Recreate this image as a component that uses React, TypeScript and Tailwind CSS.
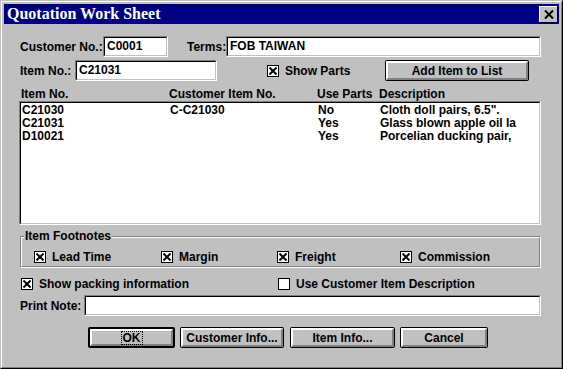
import React from 'react';

const FONT = { fontFamily: '"Liberation Sans", Arial, sans-serif' };

const rows = [
  { item: 'C21030', cust: 'C-C21030', parts: 'No', desc: 'Cloth doll pairs, 6.5".' },
  { item: 'C21031', cust: '', parts: 'Yes', desc: 'Glass blown apple oil la' },
  { item: 'D10021', cust: '', parts: 'Yes', desc: 'Porcelian ducking pair,' },
];

const Field = ({ w, value = '' }: { w: string; value?: string }) => (
  <div className={`${w} h-[21px] border border-t-[#808080] border-l-[#808080] border-b-white border-r-white`}>
    <div className="h-full border border-t-black border-l-black border-b-[#c0c0c0] border-r-[#c0c0c0] bg-white pl-[2px] leading-[17px] overflow-hidden whitespace-nowrap">
      {value}
    </div>
  </div>
);

const Check = ({ checked }: { checked: boolean }) => (
  <div className="w-[12px] h-[12px] border border-black bg-white flex items-center justify-center shrink-0">
    {checked && (
      <svg width="8" height="8" viewBox="0 0 8 8">
        <path d="M0.5 0.5 L7.5 7.5 M7.5 0.5 L0.5 7.5" stroke="black" strokeWidth="2" />
      </svg>
    )}
  </div>
);

const Button = ({ w, label, def = false }: { w: string; label: string; def?: boolean }) => (
  <div className={`${w} h-[21px] rounded-[2px] bg-black ${def ? 'p-[2px]' : 'p-[1px]'}`}>
    <div className="h-full bg-[#c0c0c0] border-2 border-t-white border-l-white border-b-[#808080] border-r-[#808080] flex items-center justify-center">
      {def ? (
        <span className="outline-1 outline-dotted outline-black px-[1px] leading-[12px]">{label}</span>
      ) : (
        <span>{label}</span>
      )}
    </div>
  </div>
);

export default function App() {
  return (
    <div className="w-[563px] h-[369px] font-bold text-[12px] text-black select-none" style={FONT}>
      <div className="w-full h-full border border-t-[#c0c0c0] border-l-[#c0c0c0] border-b-black border-r-black">
        <div className="w-full h-full border border-t-white border-l-white border-b-[#808080] border-r-[#808080] bg-[#c0c0c0] p-[2px] flex flex-col">
          {/* Title bar */}
          <div className="h-[20px] bg-[#000080] flex items-center justify-between pl-[3px] pr-[1px] shrink-0">
            <span className="text-white text-[16px] leading-[20px]" style={{ fontFamily: '"Liberation Serif", "Times New Roman", serif' }}>
              Quotation Work Sheet
            </span>
            <div className="w-[19px] h-[17px] bg-black p-[1px] pt-0 pl-0">
              <div className="w-full h-full bg-[#c0c0c0] border-t border-l border-white flex items-center justify-center">
                <svg width="10" height="9" viewBox="0 0 10 9">
                  <path d="M1 0.5 L9 8.5 M9 0.5 L1 8.5" stroke="black" strokeWidth="2" />
                </svg>
              </div>
            </div>
          </div>

          <div className="pl-[16px] pr-[16px] flex flex-col">
            {/* Row 1 */}
            <div className="flex items-center mt-[12px]">
              <span className="w-[83px]">Customer No.:</span>
              <Field w="w-[65px]" value="C0001" />
              <span className="ml-[19px] w-[39px]">Terms:</span>
              <Field w="w-[315px]" value="FOB TAIWAN" />
            </div>
            {/* Row 2 */}
            <div className="flex items-center mt-[3px]">
              <span className="w-[55px]">Item No.:</span>
              <Field w="w-[142px]" value="C21031" />
              <div className="ml-[50px] flex items-center gap-[6px] w-[118px]">
                <Check checked />
                <span>Show Parts</span>
              </div>
              <Button w="w-[144px]" label="Add Item to List" />
            </div>
            {/* List headers */}
            <div className="flex mt-[7px] leading-[13px] pl-[1px]">
              <span className="w-[148px]">Item No.</span>
              <span className="w-[148px]">Customer Item No.</span>
              <span className="w-[62px]">Use Parts</span>
              <span>Description</span>
            </div>
            {/* List box */}
            <div className="w-[522px] h-[124px] -ml-[1px] border border-t-[#808080] border-l-[#808080] border-b-white border-r-white">
              <div className="h-full border border-t-black border-l-black border-b-[#c0c0c0] border-r-[#c0c0c0] bg-white pt-[1px] pl-[1px]">
                {rows.map((r) => (
                  <div key={r.item} className="flex leading-[13px] whitespace-nowrap">
                    <span className="w-[148px]">{r.item}</span>
                    <span className="w-[148px]">{r.cust}</span>
                    <span className="w-[62px]">{r.parts}</span>
                    <span>{r.desc}</span>
                  </div>
                ))}
              </div>
            </div>
            {/* Item footnotes group */}
            <div className="relative mt-[11px] w-[521px] h-[32px] border border-t-[#808080] border-l-[#808080] border-b-white border-r-white">
              <div className="h-full border border-t-white border-l-white border-b-[#808080] border-r-[#808080] flex items-start pt-[10px]">
                <div className="flex items-center gap-[6px] w-[127px] pl-[12px] box-content">
                  <Check checked />
                  <span>Lead Time</span>
                </div>
                <div className="flex items-center gap-[6px] w-[116px]">
                  <Check checked />
                  <span>Margin</span>
                </div>
                <div className="flex items-center gap-[6px] w-[123px]">
                  <Check checked />
                  <span>Freight</span>
                </div>
                <div className="flex items-center gap-[6px]">
                  <Check checked />
                  <span>Commission</span>
                </div>
              </div>
              <span className="absolute left-[3px] -top-[7px] bg-[#c0c0c0] leading-[13px] px-[1px]">Item Footnotes</span>
            </div>
            {/* Options */}
            <div className="flex items-center mt-[7px]">
              <div className="flex items-center gap-[6px] w-[258px] pl-[1px]">
                <Check checked />
                <span>Show packing information</span>
              </div>
              <div className="flex items-center gap-[6px]">
                <Check checked={false} />
                <span>Use Customer Item Description</span>
              </div>
            </div>
            {/* Print note */}
            <div className="flex items-center mt-[2px]">
              <span className="w-[64px]">Print Note:</span>
              <Field w="w-[457px]" value="" />
            </div>
            {/* Buttons */}
            <div className="flex mt-[11px] pl-[68px]">
              <Button w="w-[87px]" label="OK" def />
              <div className="ml-[5px]">
                <Button w="w-[104px]" label="Customer Info..." />
              </div>
              <div className="ml-[6px]">
                <Button w="w-[105px]" label="Item Info..." />
              </div>
              <div className="ml-[5px]">
                <Button w="w-[88px]" label="Cancel" />
              </div>
            </div>
          </div>
        </div>
      </div>
    </div>
  );
}
